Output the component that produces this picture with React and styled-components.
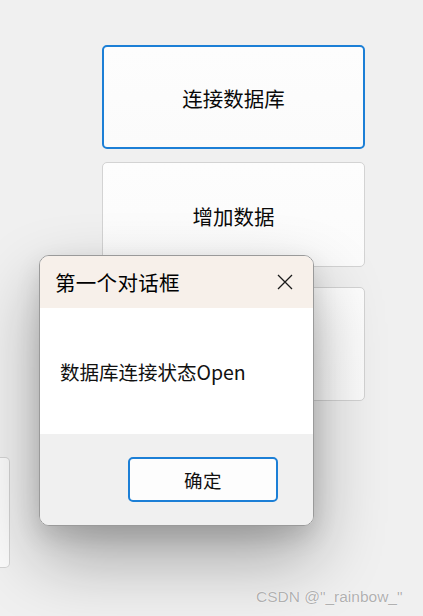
import React from "react";
import styled, { createGlobalStyle } from "styled-components";

const Global = createGlobalStyle`
  html, body { margin: 0; padding: 0; }
  body {
    background: #f0f0f0;
    font-family: "Noto Sans CJK SC", "Noto Sans", sans-serif;
    width: 423px;
    height: 616px;
    overflow: hidden;
  }
`;

const Page = styled.div`
  position: relative;
  width: 423px;
  height: 616px;
  background: #f0f0f0;
  display: flex;
  gap: 92px;
`;

const LeftColumn = styled.div`
  width: 10px;
  padding-top: 457px;
`;

const RightColumn = styled.div`
  width: 263px;
  padding-top: 45px;
  display: flex;
  flex-direction: column;
`;

const FormButton = styled.div`
  box-sizing: border-box;
  height: ${(p) => p.$h}px;
  margin-top: ${(p) => p.$mt || 0}px;
  border: ${(p) => (p.$focused ? "2px solid #1c7fd6" : "1px solid #d3d3d3")};
  border-radius: 5px;
  background: linear-gradient(#fdfdfd, #fbfbfb);
  display: flex;
  align-items: center;
  justify-content: center;
  font-size: 20.5px;
  color: #0a0a0a;
  padding-top: 2px;
`;

const PartialButton = styled.div`
  box-sizing: border-box;
  width: 10px;
  height: 111px;
  border: 1px solid #d3d3d3;
  border-left: none;
  border-radius: 0 5px 5px 0;
  background: #fbfbfb;
`;

const Dialog = styled.div`
  position: absolute;
  left: 39px;
  top: 255px;
  width: 275px;
  height: 271px;
  box-sizing: border-box;
  border: 1px solid #9a9a9a;
  border-radius: 10px;
  overflow: hidden;
  display: flex;
  flex-direction: column;
  box-shadow: 0 32px 70px rgba(0, 0, 0, 0.32), 0 10px 24px rgba(0, 0, 0, 0.12);
`;

const TitleBar = styled.div`
  height: 52px;
  background: #f7f0ea;
  display: flex;
  align-items: center;
  justify-content: space-between;
  padding: 0 20px 0 15px;
`;

const Title = styled.div`
  font-size: 20.5px;
  font-weight: 400;
  color: #000;
  letter-spacing: 0.3px;
`;

const CloseIcon = styled.svg`
  width: 16px;
  height: 16px;
  display: block;
`;

const Body = styled.div`
  height: 126px;
  background: #ffffff;
  display: flex;
  align-items: center;
  padding-left: 20px;
  font-size: 19.5px;
  color: #111;
`;

const Footer = styled.div`
  flex: 1;
  background: #f0f0f0;
  padding: 23px 0 0 88px;
`;

const OkButton = styled.div`
  box-sizing: border-box;
  width: 150px;
  height: 45px;
  border: 2px solid #1c7fd6;
  border-radius: 5px;
  background: #fdfdfd;
  display: flex;
  align-items: center;
  justify-content: center;
  font-size: 18.5px;
  color: #111;
  letter-spacing: 0.5px;
`;

const Watermark = styled.div`
  position: absolute;
  left: 256px;
  top: 588px;
  font-family: "Liberation Sans", Arial, sans-serif;
  font-size: 15.5px;
  color: #b0b0b0;
  text-shadow: 0 0 1px #fff, 0 0 1px #fff;
`;

export default function App() {
  return (
    <>
      <Global />
      <Page>
        <LeftColumn>
          <PartialButton />
        </LeftColumn>
        <RightColumn>
          <FormButton $h={104} $focused>连接数据库</FormButton>
          <FormButton $h={105} $mt={13}>增加数据</FormButton>
          <FormButton $h={114} $mt={20}>查询数据</FormButton>
        </RightColumn>
        <Dialog>
          <TitleBar>
            <Title>第一个对话框</Title>
            <CloseIcon viewBox="0 0 16 16">
              <path d="M1 1 L15 15 M15 1 L1 15" stroke="#1a1a1a" strokeWidth="1.3" fill="none" />
            </CloseIcon>
          </TitleBar>
          <Body>数据库连接状态Open</Body>
          <Footer>
            <OkButton>确定</OkButton>
          </Footer>
        </Dialog>
        <Watermark>CSDN @"_rainbow_"</Watermark>
      </Page>
    </>
  );
}
